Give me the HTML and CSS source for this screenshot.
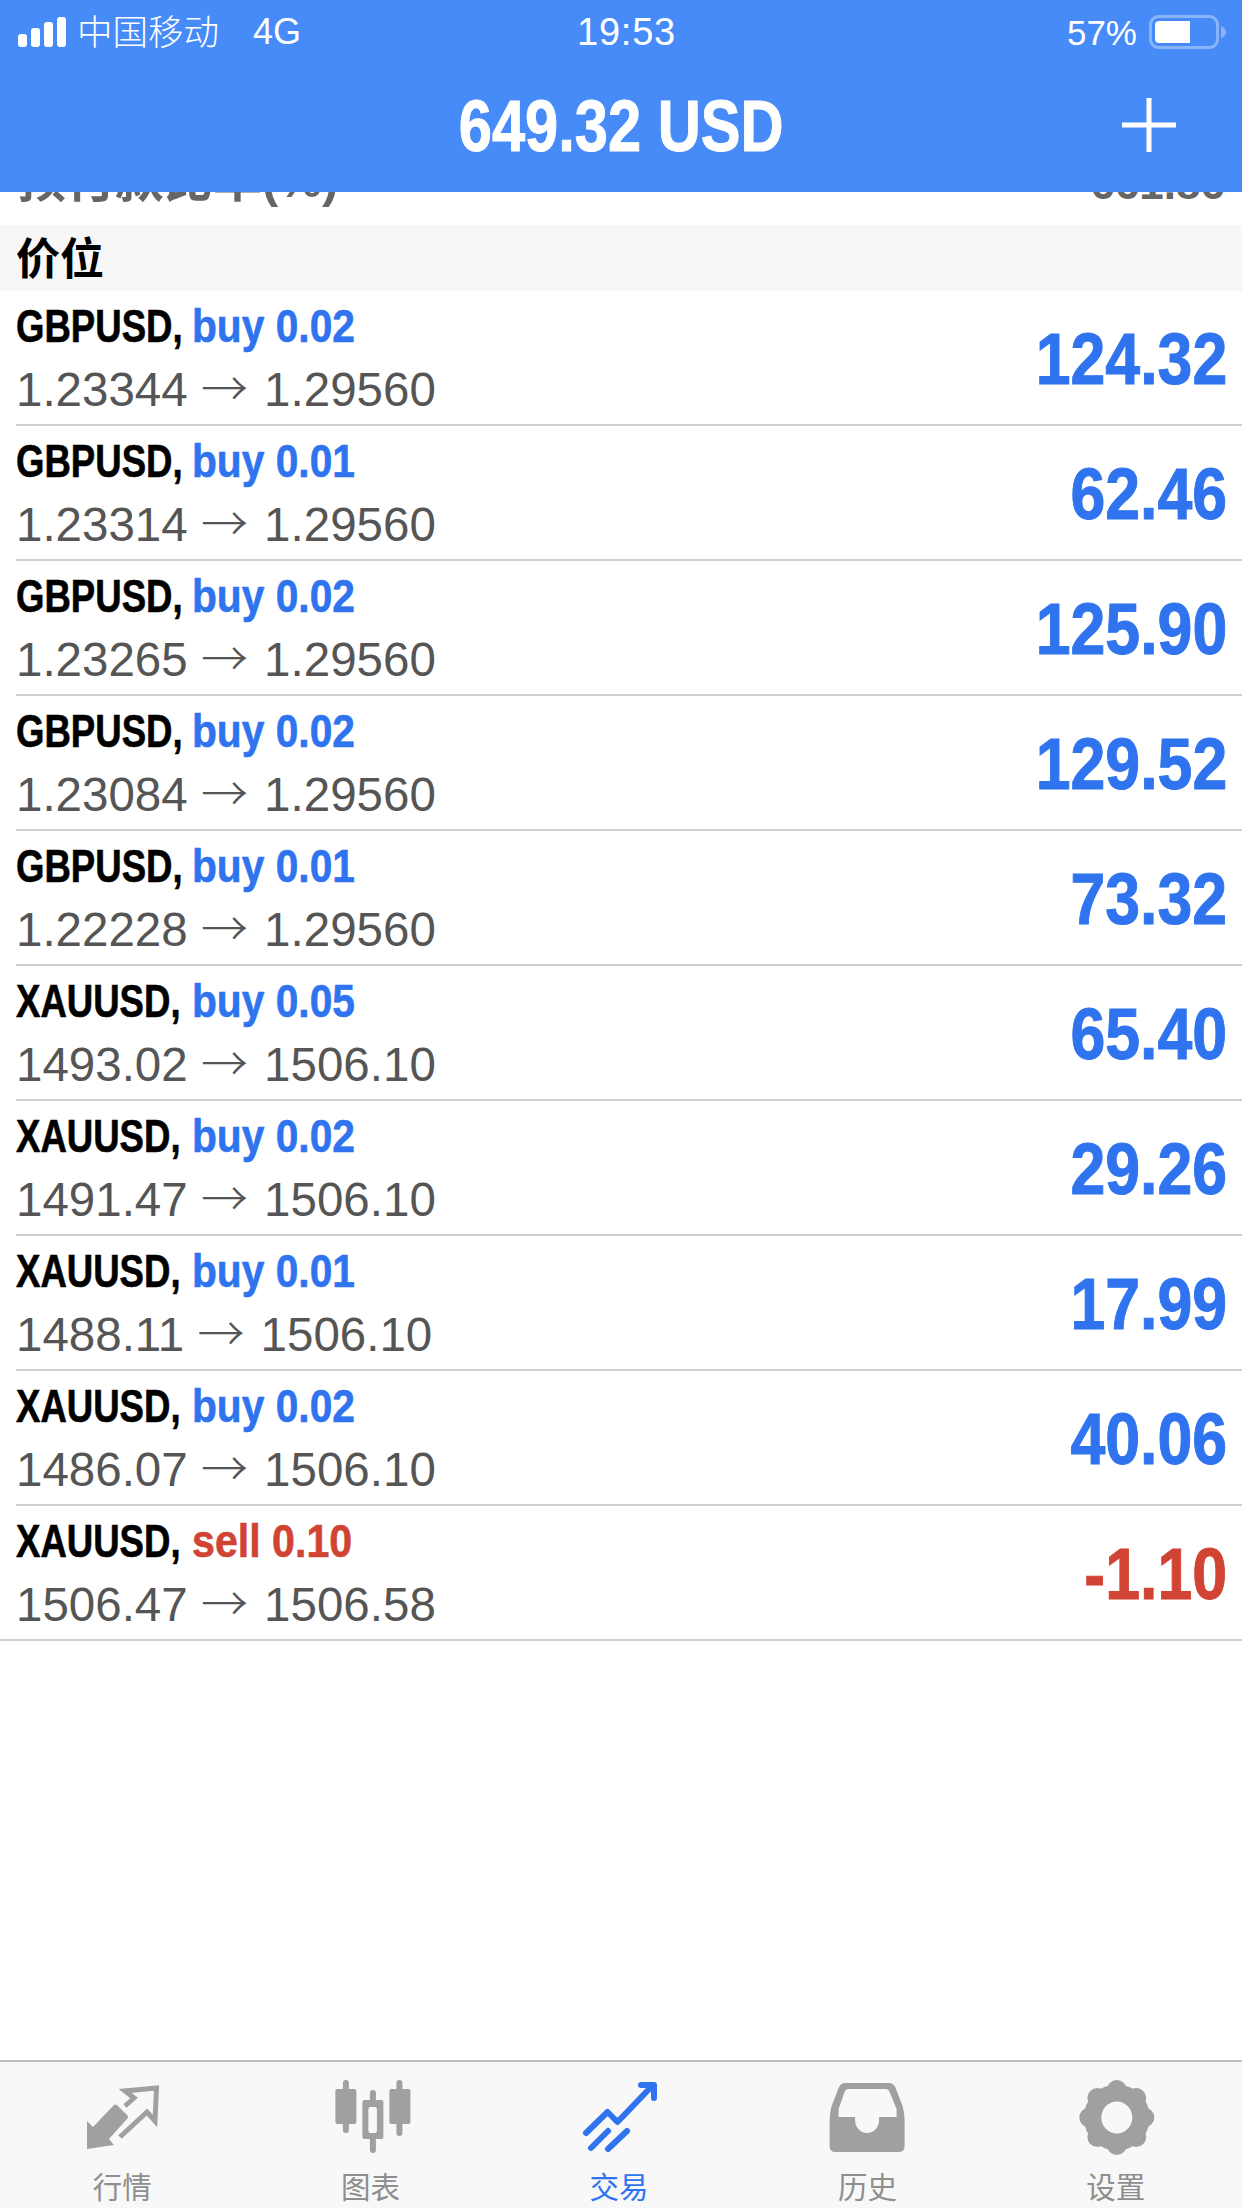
FILE: index.html
```html
<!DOCTYPE html>
<html lang="zh">
<head>
<meta charset="utf-8">
<title>交易</title>
<link rel="stylesheet" href="styles.css">
</head>
<body>
<div class="app">
  <header class="top">
    <div class="status">
      <div class="status-left">
        <svg class="signal" viewBox="0 0 48 32" width="48" height="32"><rect x="0" y="18" width="9" height="13" rx="3"/><rect x="13" y="12" width="9" height="19" rx="3"/><rect x="26" y="6" width="9" height="25" rx="3"/><rect x="39" y="1" width="9" height="30" rx="3"/></svg>
        <span class="carrier">中国移动</span>
        <span class="net">4G</span>
      </div>
      <div class="time">19:53</div>
      <div class="status-right">
        <span class="pct">57%</span>
        <svg class="battery" viewBox="0 0 78 34" width="78" height="34"><rect x="1.5" y="1.5" width="67" height="31" rx="8" fill="none" stroke="#8ab4fa" stroke-width="3"/><path d="M10 6H41V28H10Q6 28 6 24V10Q6 6 10 6Z" fill="#fff"/><path d="M72 11Q77 13 77 17Q77 21 72 23Z" fill="#8ab4fa"/></svg>
      </div>
    </div>
    <div class="nav">
      <div class="title">649.32 USD</div>
      <svg class="plus" viewBox="0 0 54 54" width="54" height="54"><path d="M24.5 0h5v24.5H54v5H29.5V54h-5V29.5H0v-5h24.5z" fill="#fff"/></svg>
    </div>
  </header>

  <div class="clipped">
    <span class="clipped-label">预付款比率(%)</span>
    <span class="clipped-value">661.86</span>
  </div>

  <div class="section">价位</div>

  <main class="list">
    <div class="row"><div class="info"><div class="l1"><b>GBPUSD,</b><span class="side buy">buy 0.02</span></div><div class="l2">1.23344 <span class="arr">→</span> 1.29560</div></div><div class="val buy">124.32</div></div>
    <div class="row"><div class="info"><div class="l1"><b>GBPUSD,</b><span class="side buy">buy 0.01</span></div><div class="l2">1.23314 <span class="arr">→</span> 1.29560</div></div><div class="val buy">62.46</div></div>
    <div class="row"><div class="info"><div class="l1"><b>GBPUSD,</b><span class="side buy">buy 0.02</span></div><div class="l2">1.23265 <span class="arr">→</span> 1.29560</div></div><div class="val buy">125.90</div></div>
    <div class="row"><div class="info"><div class="l1"><b>GBPUSD,</b><span class="side buy">buy 0.02</span></div><div class="l2">1.23084 <span class="arr">→</span> 1.29560</div></div><div class="val buy">129.52</div></div>
    <div class="row"><div class="info"><div class="l1"><b>GBPUSD,</b><span class="side buy">buy 0.01</span></div><div class="l2">1.22228 <span class="arr">→</span> 1.29560</div></div><div class="val buy">73.32</div></div>
    <div class="row"><div class="info"><div class="l1"><b>XAUUSD,</b><span class="side buy">buy 0.05</span></div><div class="l2">1493.02 <span class="arr">→</span> 1506.10</div></div><div class="val buy">65.40</div></div>
    <div class="row"><div class="info"><div class="l1"><b>XAUUSD,</b><span class="side buy">buy 0.02</span></div><div class="l2">1491.47 <span class="arr">→</span> 1506.10</div></div><div class="val buy">29.26</div></div>
    <div class="row"><div class="info"><div class="l1"><b>XAUUSD,</b><span class="side buy">buy 0.01</span></div><div class="l2">1488.11 <span class="arr">→</span> 1506.10</div></div><div class="val buy">17.99</div></div>
    <div class="row"><div class="info"><div class="l1"><b>XAUUSD,</b><span class="side buy">buy 0.02</span></div><div class="l2">1486.07 <span class="arr">→</span> 1506.10</div></div><div class="val buy">40.06</div></div>
    <div class="row last"><div class="info"><div class="l1"><b>XAUUSD,</b><span class="side sell">sell 0.10</span></div><div class="l2">1506.47 <span class="arr">→</span> 1506.58</div></div><div class="val sell">-1.10</div></div>
  </main>

  <nav class="tabs">
    <div class="tab">
      <svg class="ico" viewBox="79 2078 90 80" width="90" height="80">
        <path class="fill" d="M87 2149V2121L93 2127L113 2106Q115 2103 118 2106L127 2115Q129 2117 127 2119L109 2139L114 2145Z"/>
        <path class="line" d="M125 2106L134 2098L125 2091L156.5 2088L155 2121L147 2112L120 2137"/>
      </svg>
      <span class="lab">行情</span>
    </div>
    <div class="tab">
      <svg class="ico" viewBox="327.6 2078 90 80" width="90" height="80">
        <rect class="fill" x="335" y="2089" width="21" height="35" rx="2"/>
        <rect class="fill" x="342.5" y="2080" width="6" height="53" rx="3"/>
        <rect class="fill" x="389" y="2089" width="21" height="35" rx="2"/>
        <rect class="fill" x="396" y="2080" width="6" height="56" rx="3"/>
        <rect class="fill" x="362" y="2100" width="21" height="39" rx="2"/>
        <rect class="fill" x="369.5" y="2090" width="6" height="63" rx="3"/>
        <rect class="hole" x="368" y="2107" width="8.5" height="26" rx="2"/>
      </svg>
      <span class="lab">图表</span>
    </div>
    <div class="tab active">
      <svg class="ico" viewBox="576 2078 90 80" width="90" height="80">
        <path class="trend" d="M586 2133L607.5 2112L617.5 2122L652 2086"/>
        <path class="trend" d="M641 2085H654V2098"/>
        <path class="trend" d="M591 2148L608 2131"/>
        <path class="trend" d="M608 2149L627 2131"/>
      </svg>
      <span class="lab">交易</span>
    </div>
    <div class="tab">
      <svg class="ico" viewBox="824.4 2078 90 80" width="90" height="80">
        <path class="fill" fill-rule="evenodd" d="M846 2083H889Q894 2083 896 2088L903 2106Q905 2113 905 2120V2146Q905 2152 899 2152H836Q830 2152 830 2146V2120Q830 2113 832 2106L839 2088Q841 2083 846 2083ZM849 2089Q846 2089 845 2092L839 2109V2117H855.5V2120A12 13 0 0 0 879.5 2120V2117H897V2109L890 2092Q889 2089 886 2089Z"/>
      </svg>
      <span class="lab">历史</span>
    </div>
    <div class="tab">
      <svg class="ico" viewBox="1074 2078 90 80" width="90" height="80">
        <g class="gear">
          <path d="M1117.8 2090V2145M1090.3 2117.5H1145.3M1098.4 2098.1L1137.2 2136.9M1137.2 2098.1L1098.4 2136.9"/>
        </g>
        <circle class="fill" cx="1117.8" cy="2117.5" r="33"/>
        <ellipse class="hole" cx="1117.8" cy="2117.5" rx="15.5" ry="16"/>
      </svg>
      <span class="lab">设置</span>
    </div>
  </nav>
</div>
</body>
</html>
```

FILE: styles.css
```css
* { box-sizing: border-box; }
html, body { margin: 0; padding: 0; background: #fff; }
body { font-family: "Liberation Sans", "Noto Sans CJK SC", sans-serif; }

.app { width: 1242px; height: 2208px; display: flex; flex-direction: column; overflow: hidden; }

.top { height: 192px; background: #468bf7; color: #fff; flex: none; }
.status { height: 64px; display: grid; grid-template-columns: 1fr auto 1fr; align-items: center; padding: 0 15px 0 18px; }
.status-left { display: flex; align-items: center; }
.signal { fill: #fff; margin-right: 11px; }
.carrier { font-size: 35.5px; font-weight: 300; font-family: "Noto Sans CJK SC", sans-serif; line-height: 1; margin-top: -4px; }
.net { font-size: 36px; margin-left: 34px; line-height: 1; }
.time { font-size: 38px; line-height: 1; letter-spacing: 0.8px; margin-left: 8px; }
.status-right { display: flex; align-items: center; justify-content: flex-end; }
.pct { font-size: 35px; line-height: 1; margin-right: 12px; }

.nav { height: 128px; position: relative; display: flex; align-items: center; justify-content: center; padding-bottom: 4px; }
.title { font-weight: 700; font-size: 72px; line-height: 1; transform: scaleX(0.828); white-space: nowrap; -webkit-text-stroke: 1px #fff; }
.plus { position: absolute; right: 66px; top: 34px; }

.clipped { height: 33px; flex: none; overflow: hidden; display: flex; justify-content: space-between; align-items: flex-start; padding: 0 17px; color: #666; }
.clipped-label { font-size: 49px; line-height: 60px; flex: none; margin-top: -42px; font-weight: 700; }
.clipped-value { font-size: 44px; line-height: 60px; flex: none; margin-top: -38px; font-weight: 700; }

.section { height: 66px; flex: none; background: #f7f7f7; padding-left: 16px; font-size: 44px; line-height: 62px; font-family: "Noto Sans CJK SC", sans-serif; font-weight: 700; color: #000; }

.list { flex: 1; padding-left: 16px; }
.row { height: 135px; padding-top: 1px; padding-right: 15px; display: flex; justify-content: space-between; align-items: center; border-bottom: 2px solid #cfcfcf; }
.row.last { margin-left: -16px; padding-left: 16px; }
.info { line-height: 63px; }
.l1 { display: flex; font-size: 46px; font-weight: 700; color: #000; white-space: nowrap; -webkit-text-stroke: 0.6px; }
.l1 b { display: block; width: 176px; flex: none; font-weight: 700; transform: scaleX(0.795); transform-origin: left center; }
.side { display: block; transform: scaleX(0.885); transform-origin: left center; }
.side.sell { transform: scaleX(0.895); }
.l2 { font-size: 47.5px; color: #555; white-space: nowrap; }
.arr { font-family: "Noto Sans CJK SC", sans-serif; font-weight: 300; font-size: 47px; line-height: 1; margin-right: 3px; }
.val { font-size: 72px; font-weight: 700; line-height: 1; transform: scaleX(0.87); transform-origin: right center; -webkit-text-stroke: 1px; margin-top: 2px; }
.buy { color: #2f74ee; }
.sell { color: #d14333; }

.tabs { height: 148px; flex: none; background: #f8f8f8; border-top: 2px solid #bdbdbd; display: grid; grid-template-columns: repeat(5, 1fr); }
.tab { display: flex; flex-direction: column; align-items: center; padding-top: 16px; color: #8e8e8e; }
.tab.active { color: #2f74ee; }
.ico { display: block; flex: none; }
.lab { font-family: "Noto Sans CJK SC", sans-serif; font-size: 29.5px; line-height: 36px; margin-top: 9px; margin-right: 4px; }
.fill { fill: #a0a0a0; }
.hole { fill: #f8f8f8; }
.line { fill: none; stroke: #a0a0a0; stroke-width: 5; stroke-linejoin: miter; }
.trend { fill: none; stroke: #2f74ee; stroke-width: 6; stroke-linecap: round; stroke-linejoin: round; }
.gear path { fill: none; stroke: #a0a0a0; stroke-width: 20; stroke-linecap: round; }
```
